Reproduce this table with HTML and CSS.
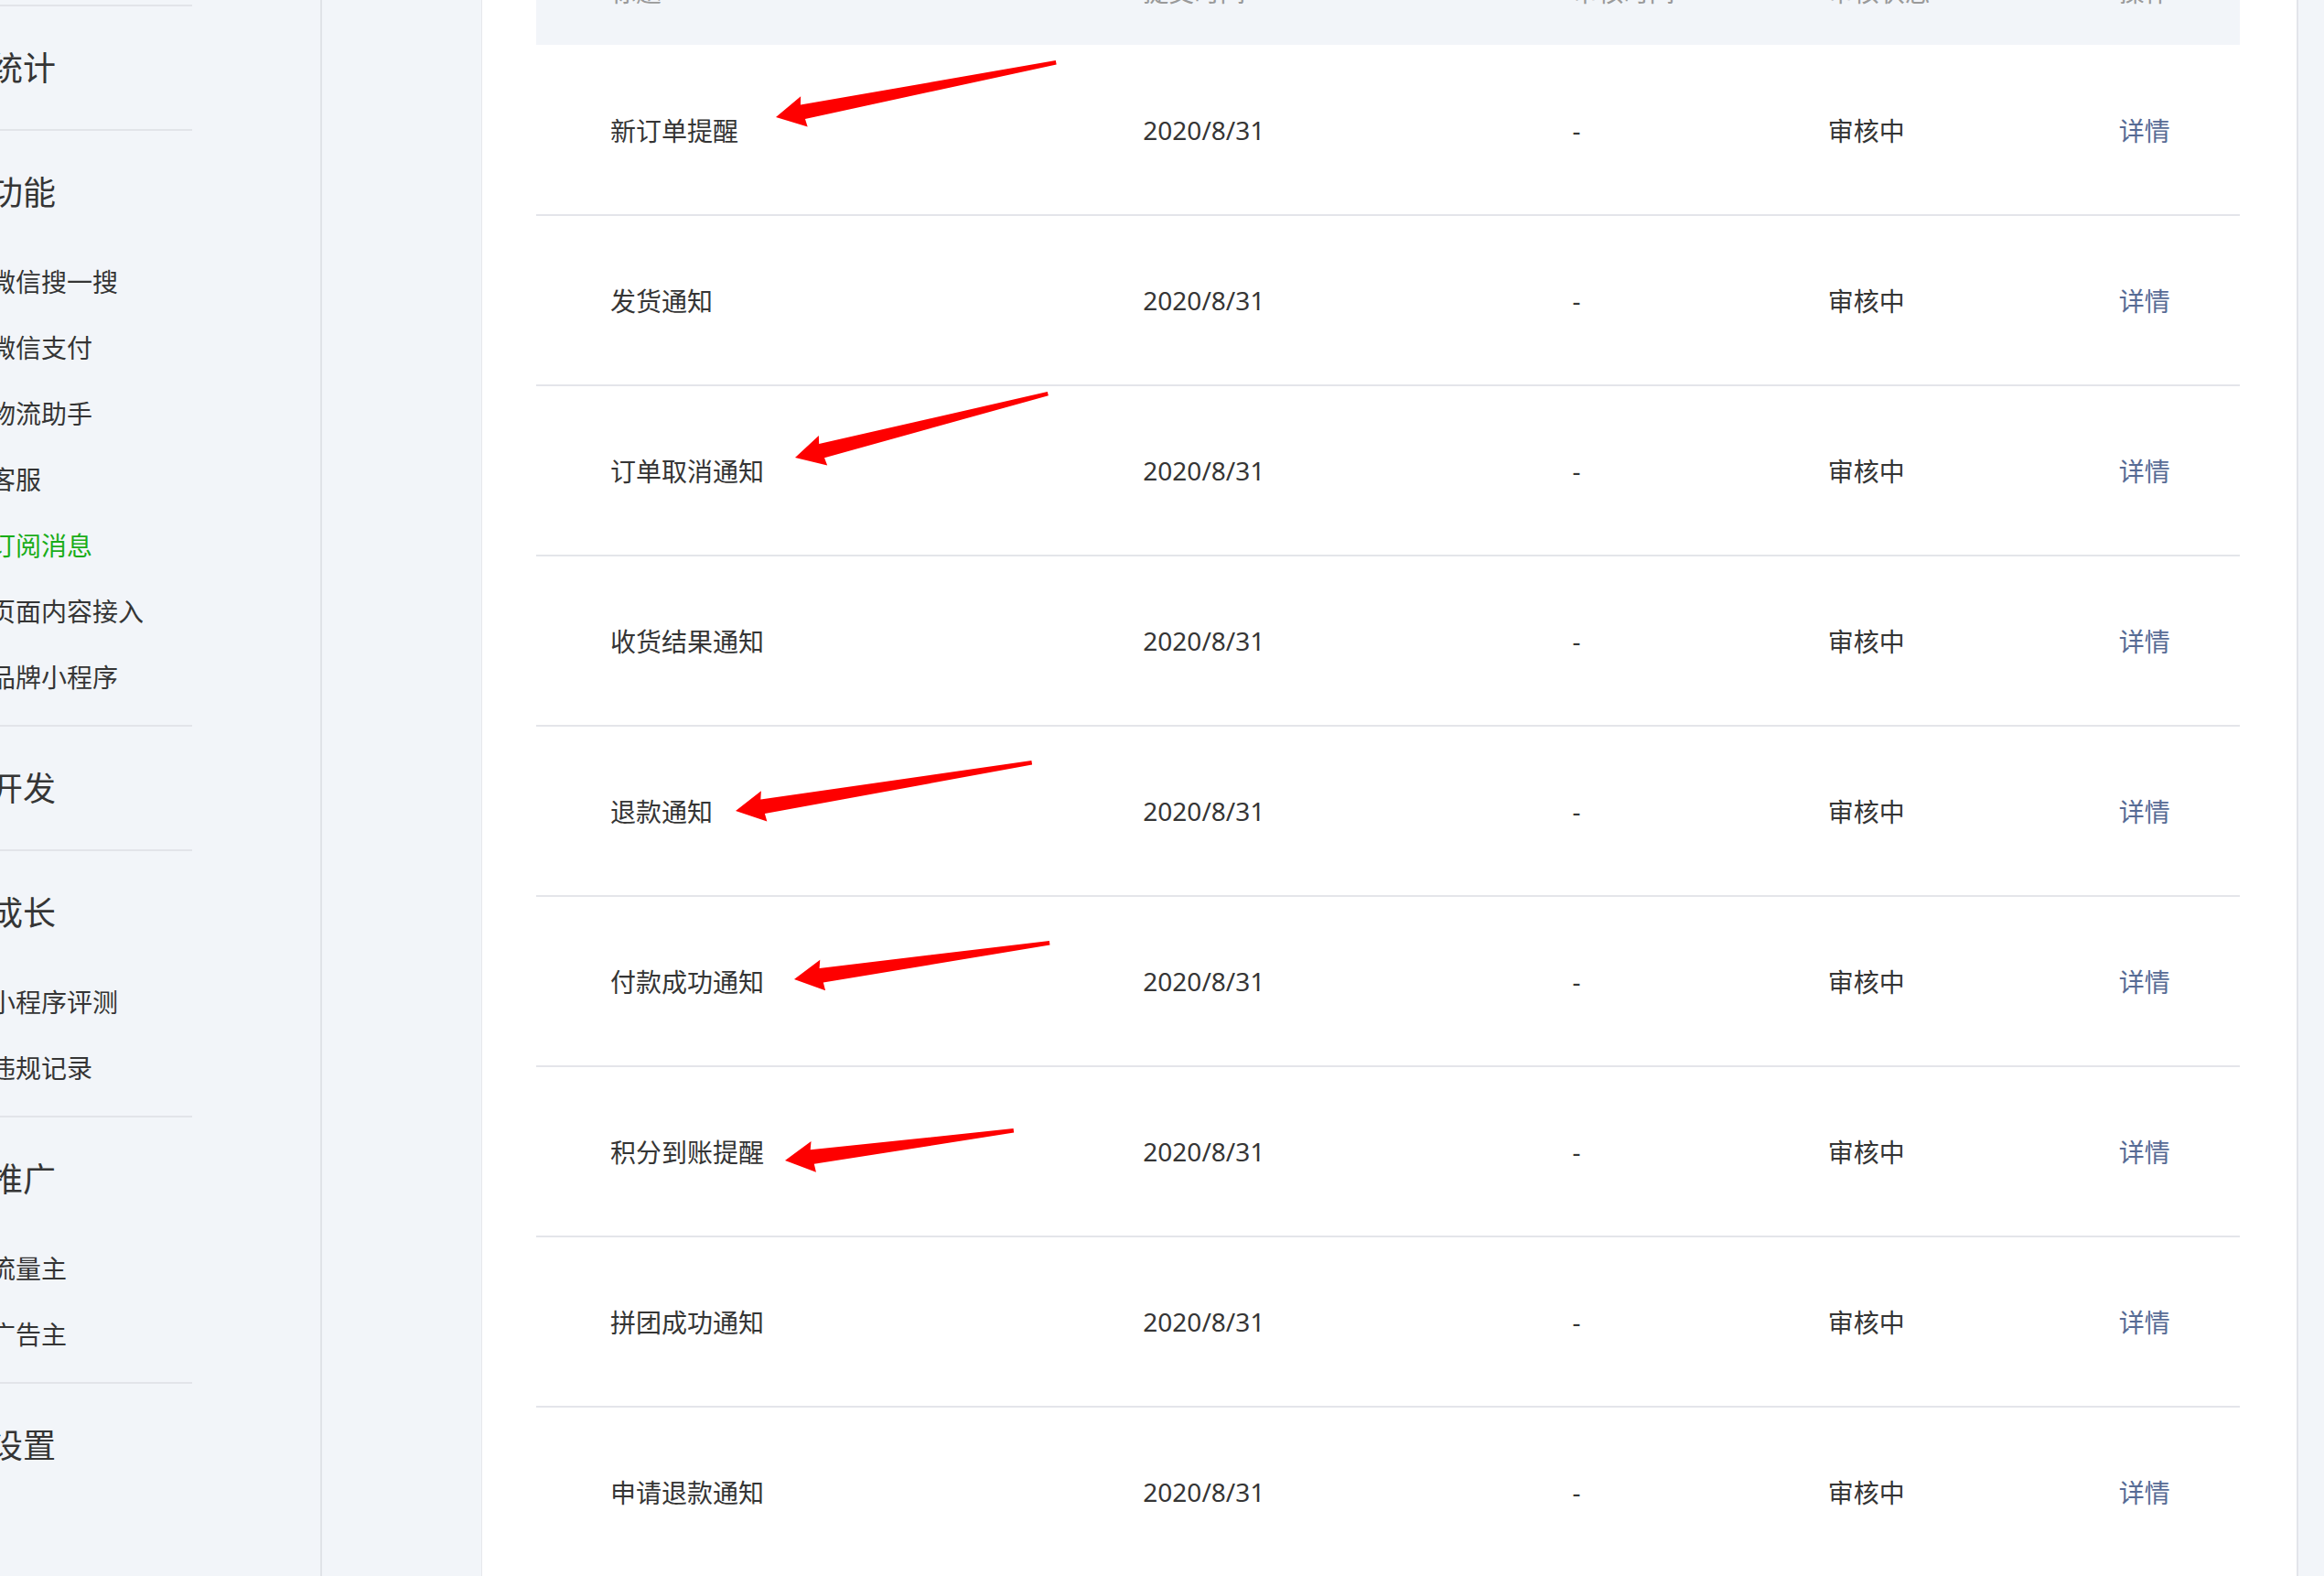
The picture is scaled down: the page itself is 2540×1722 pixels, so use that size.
FILE: index.html
```html
<html>
    <head>
        <title>订阅消息</title>
        <meta charset="utf-8">
        <link rel="stylesheet" href="styles.css">
    </head>
    <body>
        <div class="page">

            <div class="sidebar">
                <div class="nav-section">
                    <div class="nav-title">统计</div>
                </div>
                <div class="nav-section">
                    <div class="nav-title">功能</div>
                    <ul class="nav-items">
                        <li>微信搜一搜</li>
                        <li>微信支付</li>
                        <li>物流助手</li>
                        <li>客服</li>
                        <li class="active">订阅消息</li>
                        <li>页面内容接入</li>
                        <li>品牌小程序</li>
                    </ul>
                </div>
                <div class="nav-section">
                    <div class="nav-title">开发</div>
                </div>
                <div class="nav-section">
                    <div class="nav-title">成长</div>
                    <ul class="nav-items">
                        <li>小程序评测</li>
                        <li>违规记录</li>
                    </ul>
                </div>
                <div class="nav-section">
                    <div class="nav-title">推广</div>
                    <ul class="nav-items">
                        <li>流量主</li>
                        <li>广告主</li>
                    </ul>
                </div>
                <div class="nav-section">
                    <div class="nav-title">设置</div>
                </div>
            </div>

            <div class="subnav"></div>

            <div class="main">
                <table class="list">
                    <colgroup>
                        <col class="col-title">
                        <col class="col-submit">
                        <col class="col-review">
                        <col class="col-status">
                        <col class="col-action">
                    </colgroup>
                    <thead>
                        <tr>
                            <th>标题</th>
                            <th>提交时间</th>
                            <th>审核时间</th>
                            <th>审核状态</th>
                            <th>操作</th>
                        </tr>
                    </thead>
                    <tbody>
                        <tr><td>新订单提醒</td><td>2020/8/31</td><td>-</td><td>审核中</td><td><a class="link">详情</a></td></tr>
                        <tr><td>发货通知</td><td>2020/8/31</td><td>-</td><td>审核中</td><td><a class="link">详情</a></td></tr>
                        <tr><td>订单取消通知</td><td>2020/8/31</td><td>-</td><td>审核中</td><td><a class="link">详情</a></td></tr>
                        <tr><td>收货结果通知</td><td>2020/8/31</td><td>-</td><td>审核中</td><td><a class="link">详情</a></td></tr>
                        <tr><td>退款通知</td><td>2020/8/31</td><td>-</td><td>审核中</td><td><a class="link">详情</a></td></tr>
                        <tr><td>付款成功通知</td><td>2020/8/31</td><td>-</td><td>审核中</td><td><a class="link">详情</a></td></tr>
                        <tr><td>积分到账提醒</td><td>2020/8/31</td><td>-</td><td>审核中</td><td><a class="link">详情</a></td></tr>
                        <tr><td>拼团成功通知</td><td>2020/8/31</td><td>-</td><td>审核中</td><td><a class="link">详情</a></td></tr>
                        <tr><td>申请退款通知</td><td>2020/8/31</td><td>-</td><td>审核中</td><td><a class="link">详情</a></td></tr>
                    </tbody>
                </table>
            </div>

            <div class="rightbar"></div>
        </div>

        <!-- red annotation arrows drawn over the screenshot -->
        <svg class="marks" width="2540" height="1722" viewBox="0 0 2540 1722">
            <g fill="#fe0000">
                <polygon transform="translate(848 128) rotate(-11.09)" points="0,0 31,-17 29,-8 312,-2 312,2.5 31,8 32,17"/>
                <polygon transform="translate(869 500) rotate(-14.23)" points="0,0 31,-17 29,-8 285,-2 285,2.5 31,8 32,17"/>
                <polygon transform="translate(804 886) rotate(-9.29)" points="0,0 31,-17 29,-8 328,-2 328,2.5 31,8 32,17"/>
                <polygon transform="translate(868 1070) rotate(-8.16)" points="0,0 31,-17 29,-8 282,-2 282,2.5 31,8 32,17"/>
                <polygon transform="translate(858 1268) rotate(-7.52)" points="0,0 31,-17 29,-8 252,-2 252,2.5 31,8 32,17"/>
            </g>
        </svg>
    </body>
</html>
```

FILE: styles.css
```css
html,
body {
    width: 100%;
    height: 100%;
    margin: 0;
    overflow: hidden;
    background-color: #f2f5f9;
    font-family: "Noto Sans", "Noto Sans CJK SC", sans-serif;
    color: #353535;
}
body{
    position: relative;
}
.page {
    display: flex;
    height: 100%;
}

/* left menu (scrolled, cut on the left edge) */
.sidebar {
    width: 350px;
    flex-shrink: 0;
    padding-top: 5px;
    border-right: 2px solid #e0e3e8;
}
.nav-section {
    width: 210px;
    border-top: 2px solid #e2e4e9;
}
.nav-title {
    margin-left: -11px;
    padding: 40px 0 38px;
    font-size: 36px;
    line-height: 56px;
    white-space: nowrap;
}
.nav-items {
    list-style: none;
    margin: -5px 0 0 -11px;
    padding: 0 0 16px 0;
}
.nav-items li {
    font-size: 28px;
    line-height: 72px;
    white-space: nowrap;
}
.nav-items li.active {
    color: #1aad19;
}

.subnav {
    width: 174px;
    flex-shrink: 0;
}

.main {
    flex: 1;
    background-color: white;
    border-left: 1px solid #e6e8ec;
    padding: 0 62px 0 59px;
    overflow: hidden;
}
.rightbar {
    width: 28px;
    flex-shrink: 0;
    border-left: 2px solid #e3e5ea;
}

/* list */
.list {
    width: 100%;
    margin-top: -69px;
    border-collapse: collapse;
    table-layout: fixed;
    font-size: 28px;
}
.col-title { width: 582px; }
.col-submit { width: 469px; }
.col-review { width: 279px; }
.col-status { width: 318px; }
.col-action { width: 213px; }

.list th {
    height: 118px;
    padding: 0 0 0 81px;
    background-color: #f2f5f9;
    color: #9a9a9a;
    font-weight: normal;
    text-align: left;
}
.list td {
    height: 186px;
    padding: 0 0 0 81px;
    border-bottom: 2px solid #e4e5ea;
    text-align: left;
    white-space: nowrap;
}
.link {
    color: #576b95;
    cursor: pointer;
}

.marks {
    position: absolute;
    top: 0;
    left: 0;
    pointer-events: none;
}
```
